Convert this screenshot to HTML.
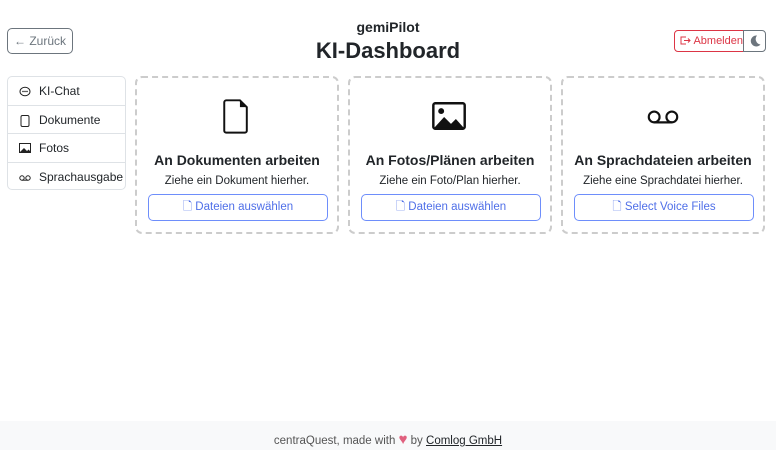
<!DOCTYPE html>
<html><head><meta charset="utf-8"><style>
*{box-sizing:border-box;margin:0;padding:0}
body{width:776px;height:450px;overflow:hidden;background:#fff;font-family:"Liberation Sans",sans-serif;color:#212529;position:relative}
.back{position:absolute;left:7px;top:28px;width:66px;height:26px;border:1px solid #6c757d;border-radius:5px;color:#6c757d;font-size:12px;line-height:24px;text-align:center}
.t1{position:absolute;left:0;width:776px;top:19px;text-align:center;font-size:14px;font-weight:bold}
.t2{position:absolute;left:0;width:776px;top:38px;text-align:center;font-size:22px;font-weight:bold}
.out{position:absolute;left:674px;top:30px;width:70px;height:22px;border:1px solid #dc3545;border-radius:4px 0 0 4px;color:#dc3545;font-size:11px;line-height:20px;padding-left:5px}
.moon{position:absolute;left:743px;top:30px;width:23px;height:22px;border:1px solid #6c757d;border-radius:0 4px 4px 0}
.side{position:absolute;left:7px;top:76px;width:119px;height:114px;border:1px solid #dee2e6;border-radius:5px}
.side div{height:28.5px;border-bottom:1px solid #dee2e6;font-size:12px;line-height:28px;padding-left:31px;position:relative}
.side div:last-child{border:none}
.side svg{position:absolute;left:11px;top:9px}
.card{position:absolute;top:76px;width:204px;height:158px;border:2px dashed #ccc;border-radius:7px;text-align:center}
.card h3{position:absolute;top:74px;width:100%;font-size:14px}
.card p{position:absolute;top:97px;width:100%;font-size:11.5px}
.card .btn{position:absolute;left:11px;top:116px;width:180px;height:27px;border:1px solid #6e8efb;border-radius:5px;color:#4f6fe8;font-size:11.5px;line-height:25px}
.card .ic{position:absolute;left:0;width:100%;top:20px}
.foot{position:absolute;left:0;top:421px;width:776px;height:29px;background:#f8f9fa;text-align:center;font-size:11.5px;line-height:38px;color:#555}
.foot u{color:#212529}
</style></head><body>
<div class="back">← Zurück</div>
<div class="t1">gemiPilot</div>
<div class="t2">KI-Dashboard</div>
<div class="out"><svg width="11" height="9" viewBox="0 0 11 9" style="vertical-align:-1px"><path d="M6 1H1v7h5M4 4.5h6M8 2.5l2 2-2 2" fill="none" stroke="#dc3545"/></svg> Abmelden</div>
<div class="moon"><svg width="23" height="20" viewBox="0 0 23 20"><path d="M13 4.5a5.5 5.5 0 1 0 3.5 9a5.5 5.5 0 0 1-3.5-9z" fill="#6c757d"/></svg></div>
<div class="side">
<div><svg width="12" height="11"><ellipse cx="6" cy="5.5" rx="5" ry="4.3" fill="none" stroke="#222"/><circle cx="4" cy="5.5" r=".7"/><circle cx="6" cy="5.5" r=".7"/><circle cx="8" cy="5.5" r=".7"/></svg>KI-Chat</div>
<div><svg width="12" height="12"><rect x="2" y=".5" width="8" height="11" rx="1.5" fill="none" stroke="#222"/></svg>Dokumente</div>
<div><svg width="12" height="11"><rect x=".5" y=".5" width="11" height="9" fill="none" stroke="#222"/><path d="M1 9l4-4 3 3 1.5-1.5L11 8v2H1z" fill="#222"/></svg>Fotos</div>
<div><svg width="12" height="11"><circle cx="3" cy="6" r="2.2" fill="none" stroke="#222"/><circle cx="9" cy="6" r="2.2" fill="none" stroke="#222"/><path d="M3 8.2h6" stroke="#222"/></svg>Sprachausgabe</div>
</div>
<div class="card" style="left:135px"><svg class="ic" width="204" height="36" viewBox="0 0 204 36"><path d="M91 2h14l7 7v24a2 2 0 0 1-2 2H91a2 2 0 0 1-2-2V4a2 2 0 0 1 2-2z" fill="none" stroke="#111" stroke-width="2"/><path d="M105 2v7h7z" fill="#111"/></svg><h3>An Dokumenten arbeiten</h3><p>Ziehe ein Dokument hierher.</p><div class="btn">🗋 Dateien auswählen</div></div>
<div class="card" style="left:348px"><svg class="ic" width="204" height="36" viewBox="0 0 204 36"><rect x="85" y="5" width="32" height="26" rx="2" fill="none" stroke="#111" stroke-width="2.5"/><circle cx="93" cy="13" r="3" fill="#111"/><path d="M86 30l10-11 7 7 5-5 8 9z" fill="#111"/></svg><h3>An Fotos/Plänen arbeiten</h3><p>Ziehe ein Foto/Plan hierher.</p><div class="btn">🗋 Dateien auswählen</div></div>
<div class="card" style="left:561px"><svg class="ic" width="204" height="36" viewBox="0 0 204 36"><circle cx="93" cy="19" r="5.5" fill="none" stroke="#111" stroke-width="2.2"/><circle cx="111" cy="19" r="5.5" fill="none" stroke="#111" stroke-width="2.2"/><path d="M93 24.5h18" stroke="#111" stroke-width="2.2"/></svg><h3>An Sprachdateien arbeiten</h3><p>Ziehe eine Sprachdatei hierher.</p><div class="btn">🗋 Select Voice Files</div></div>
<div class="foot">centraQuest, made with <span style="color:#e0607e;font-size:15px">♥</span> by <u>Comlog GmbH</u></div>
</body></html>
